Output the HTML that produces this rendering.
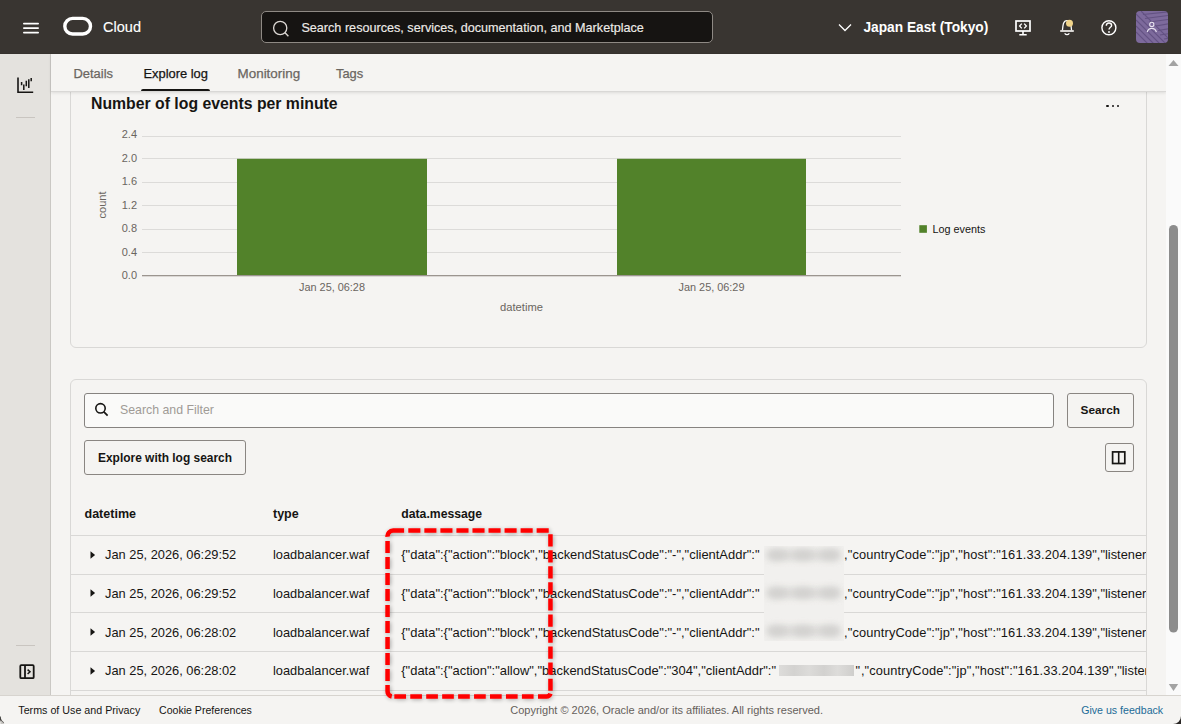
<!DOCTYPE html>
<html><head><meta charset="utf-8"><title>Explore log</title>
<style>
html,body{margin:0;padding:0;width:1181px;height:724px;overflow:hidden;background:#f5f4f2;}
body{position:relative;font-family:"Liberation Sans",sans-serif;}
.t{position:absolute;white-space:nowrap;line-height:1;font-family:"Liberation Sans",sans-serif;}
</style></head><body>
<div style="position:absolute;left:0px;top:0px;width:1181px;height:724px;background:#f5f4f2"></div>
<div style="position:absolute;left:0px;top:54px;width:50px;height:641px;background:#e4e2de"></div>
<div style="position:absolute;left:50px;top:54px;width:1px;height:641px;background:#cac8c4"></div>
<svg style="position:absolute;left:0;top:0" width="51" height="700">
<path d="M18 77.5 V92.2 H33.2" fill="none" stroke="#161513" stroke-width="1.6"/>
<path d="M21.6 82 V85.2 M23.8 84.6 V90 M26.3 80.8 V86.2 M28.8 79.2 V88 M31.2 78 V81.3" stroke="#161513" stroke-width="1.5"/>
<rect x="16" y="117" width="19" height="1" fill="#c9c5c0"/>
<rect x="16" y="645" width="19" height="1" fill="#c9c5c0"/>
<rect x="20.3" y="665.2" width="13.4" height="13" rx="1" fill="none" stroke="#161513" stroke-width="1.8"/>
<path d="M25 665 V678.5" stroke="#161513" stroke-width="1.8"/>
<path d="M27.6 669.6 L30 671.8 L27.6 674" fill="none" stroke="#161513" stroke-width="1.5"/>
</svg>
<div style="position:absolute;left:70px;top:40px;width:1077px;height:308px;border:1px solid #d9d8d6;border-radius:6px;box-sizing:border-box"></div>
<div class="t" style="left:91.00px;top:95.63px;font-size:15.8px;font-weight:700;color:#161513;">Number of log events per minute</div>
<div style="position:absolute;left:1106.05px;top:104.6px;width:2.5px;height:2.5px;border-radius:50%;background:#161513"></div>
<div style="position:absolute;left:1111.55px;top:104.6px;width:2.5px;height:2.5px;border-radius:50%;background:#161513"></div>
<div style="position:absolute;left:1116.85px;top:104.6px;width:2.5px;height:2.5px;border-radius:50%;background:#161513"></div>
<svg style="position:absolute;left:0;top:0" width="1181" height="360"><rect x="142" y="136" width="759" height="1" fill="#dcdbd9"/><rect x="142" y="158" width="759" height="1" fill="#dcdbd9"/><rect x="142" y="182" width="759" height="1" fill="#dcdbd9"/><rect x="142" y="205" width="759" height="1" fill="#dcdbd9"/><rect x="142" y="229" width="759" height="1" fill="#dcdbd9"/><rect x="142" y="252" width="759" height="1" fill="#dcdbd9"/><rect x="237" y="158.8" width="190" height="116.2" fill="#52822a"/><rect x="617" y="158.8" width="189" height="116.2" fill="#52822a"/><rect x="142" y="275" width="759" height="1.3" fill="#9b958f"/><rect x="919.3" y="225.2" width="7.6" height="7.6" fill="#52822a"/></svg>
<div class="t" style="right:1044.00px;top:129.29px;font-size:11px;font-weight:400;color:#6a6560;">2.4</div>
<div class="t" style="right:1044.00px;top:152.79px;font-size:11px;font-weight:400;color:#6a6560;">2.0</div>
<div class="t" style="right:1044.00px;top:176.29px;font-size:11px;font-weight:400;color:#6a6560;">1.6</div>
<div class="t" style="right:1044.00px;top:199.79px;font-size:11px;font-weight:400;color:#6a6560;">1.2</div>
<div class="t" style="right:1044.00px;top:223.29px;font-size:11px;font-weight:400;color:#6a6560;">0.8</div>
<div class="t" style="right:1044.00px;top:246.79px;font-size:11px;font-weight:400;color:#6a6560;">0.4</div>
<div class="t" style="right:1044.00px;top:270.29px;font-size:11px;font-weight:400;color:#6a6560;">0.0</div>
<div class="t" style="left:32.00px;width:600px;text-align:center;top:281.57px;font-size:10.9px;font-weight:400;color:#6a6560;">Jan 25, 06:28</div>
<div class="t" style="left:411.50px;width:600px;text-align:center;top:281.57px;font-size:10.9px;font-weight:400;color:#6a6560;">Jan 25, 06:29</div>
<div class="t" style="left:221.50px;width:600px;text-align:center;top:302.12px;font-size:11.2px;font-weight:400;color:#6a6560;">datetime</div>
<div class="t" style="left:932.50px;top:223.86px;font-size:10.8px;font-weight:400;color:#161513;">Log events</div>
<div class="t" style="left:73px;top:199px;width:60px;text-align:center;font-size:11px;color:#6a6560;transform:rotate(-90deg);transform-origin:30px 6px;">count</div>
<div style="position:absolute;left:70px;top:379px;width:1077px;height:381px;border:1px solid #d9d8d6;border-radius:6px;box-sizing:border-box"></div>
<div style="position:absolute;left:84px;top:393px;width:970px;height:35px;background:#fafaf9;border:1px solid #868380;border-radius:3px;box-sizing:border-box"></div>
<svg style="position:absolute;left:90px;top:398px" width="24" height="24">
<circle cx="10.5" cy="10.3" r="4.7" fill="none" stroke="#161513" stroke-width="1.6"/>
<path d="M13.9 13.8 L17.6 17.7" stroke="#161513" stroke-width="1.7"/>
</svg>
<div class="t" style="left:120.00px;top:403.55px;font-size:12.34px;font-weight:400;color:#a09b96;">Search and Filter</div>
<div style="position:absolute;left:1067px;top:393px;width:67px;height:35px;border:1px solid #8a8682;border-radius:3px;box-sizing:border-box"></div>
<div class="t" style="left:1080.50px;top:404.68px;font-size:11.84px;font-weight:700;color:#161513;">Search</div>
<div style="position:absolute;left:84px;top:440px;width:162px;height:35px;border:1px solid #8a8682;border-radius:3px;box-sizing:border-box"></div>
<div class="t" style="left:98.00px;top:452.89px;font-size:11.94px;font-weight:700;color:#161513;">Explore with log search</div>
<div style="position:absolute;left:1105px;top:443px;width:29px;height:29px;border:1px solid #8a8682;border-radius:3px;box-sizing:border-box"></div>
<svg style="position:absolute;left:1105px;top:443px" width="29" height="29">
<rect x="7.6" y="8.9" width="12.2" height="11.6" fill="none" stroke="#161513" stroke-width="1.7"/>
<path d="M13.7 8.5 V20.8" stroke="#161513" stroke-width="1.6"/>
</svg>
<div class="t" style="left:84.50px;top:508.40px;font-size:12.52px;font-weight:700;color:#161513;">datetime</div>
<div class="t" style="left:273.00px;top:508.42px;font-size:12.5px;font-weight:700;color:#161513;">type</div>
<div class="t" style="left:401.30px;top:508.46px;font-size:12.21px;font-weight:700;color:#161513;">data.message</div>
<div style="position:absolute;left:71px;top:535px;width:1075px;height:1px;background:#d9d8d6"></div>
<div style="position:absolute;left:71px;top:574px;width:1075px;height:1px;background:#d9d8d6"></div>
<div style="position:absolute;left:71px;top:612px;width:1075px;height:1px;background:#d9d8d6"></div>
<div style="position:absolute;left:71px;top:651px;width:1075px;height:1px;background:#d9d8d6"></div>
<div style="position:absolute;left:71px;top:690px;width:1075px;height:1px;background:#d9d8d6"></div>
<div style="position:absolute;left:71px;top:536px;width:1075px;height:159px;overflow:hidden">
<svg style="position:absolute;left:19px;top:13.75px" width="8" height="10"><path d="M0.5 1.25 L5.1 5 L0.5 8.75 Z" fill="#161513"/></svg>
<div class="t" style="left:34.00px;top:13.34px;font-size:12.83px;font-weight:400;color:#161513;">Jan 25, 2026, 06:29:52</div>
<div class="t" style="left:202.00px;top:13.34px;font-size:12.83px;font-weight:400;color:#161513;">loadbalancer.waf</div>
<div class="t" style="left:330.30px;top:13.24px;font-size:12.95px;font-weight:400;color:#161513;">{"data":{"action":"block","backendStatusCode":"-","clientAddr":"</div>
<div class="t" style="left:773.10px;top:13.34px;font-size:12.83px;font-weight:400;color:#161513;letter-spacing:0.13px;">,"countryCode":"jp","host":"</div>
<div class="t" style="left:929.80px;top:13.34px;font-size:12.83px;font-weight:400;color:#161513;letter-spacing:0.17px;">161.33.204.139</div>
<div class="t" style="left:1021.30px;top:13.34px;font-size:12.83px;font-weight:400;color:#161513;">","listenerOcid":"ocid1"</div>
<svg style="position:absolute;left:19px;top:52.45px" width="8" height="10"><path d="M0.5 1.25 L5.1 5 L0.5 8.75 Z" fill="#161513"/></svg>
<div class="t" style="left:34.00px;top:52.04px;font-size:12.83px;font-weight:400;color:#161513;">Jan 25, 2026, 06:29:52</div>
<div class="t" style="left:202.00px;top:52.04px;font-size:12.83px;font-weight:400;color:#161513;">loadbalancer.waf</div>
<div class="t" style="left:330.30px;top:51.94px;font-size:12.95px;font-weight:400;color:#161513;">{"data":{"action":"block","backendStatusCode":"-","clientAddr":"</div>
<div class="t" style="left:773.10px;top:52.04px;font-size:12.83px;font-weight:400;color:#161513;letter-spacing:0.13px;">,"countryCode":"jp","host":"</div>
<div class="t" style="left:929.80px;top:52.04px;font-size:12.83px;font-weight:400;color:#161513;letter-spacing:0.17px;">161.33.204.139</div>
<div class="t" style="left:1021.30px;top:52.04px;font-size:12.83px;font-weight:400;color:#161513;">","listenerOcid":"ocid1"</div>
<svg style="position:absolute;left:19px;top:91.15px" width="8" height="10"><path d="M0.5 1.25 L5.1 5 L0.5 8.75 Z" fill="#161513"/></svg>
<div class="t" style="left:34.00px;top:90.64px;font-size:12.83px;font-weight:400;color:#161513;">Jan 25, 2026, 06:28:02</div>
<div class="t" style="left:202.00px;top:90.64px;font-size:12.83px;font-weight:400;color:#161513;">loadbalancer.waf</div>
<div class="t" style="left:330.30px;top:90.54px;font-size:12.95px;font-weight:400;color:#161513;">{"data":{"action":"block","backendStatusCode":"-","clientAddr":"</div>
<div class="t" style="left:773.10px;top:90.64px;font-size:12.83px;font-weight:400;color:#161513;letter-spacing:0.13px;">,"countryCode":"jp","host":"</div>
<div class="t" style="left:929.80px;top:90.64px;font-size:12.83px;font-weight:400;color:#161513;letter-spacing:0.17px;">161.33.204.139</div>
<div class="t" style="left:1021.30px;top:90.64px;font-size:12.83px;font-weight:400;color:#161513;">","listenerOcid":"ocid1"</div>
<svg style="position:absolute;left:19px;top:129.85px" width="8" height="10"><path d="M0.5 1.25 L5.1 5 L0.5 8.75 Z" fill="#161513"/></svg>
<div class="t" style="left:34.00px;top:129.24px;font-size:12.83px;font-weight:400;color:#161513;">Jan 25, 2026, 06:28:02</div>
<div class="t" style="left:202.00px;top:129.24px;font-size:12.83px;font-weight:400;color:#161513;">loadbalancer.waf</div>
<div class="t" style="left:330.30px;top:129.14px;font-size:12.95px;font-weight:400;color:#161513;">{"data":{"action":"allow","backendStatusCode":"304","clientAddr":"</div>
<div class="t" style="left:784.60px;top:129.24px;font-size:12.83px;font-weight:400;color:#161513;">"</div>
<div class="t" style="left:789.90px;top:129.24px;font-size:12.83px;font-weight:400;color:#161513;letter-spacing:0.13px;">,"countryCode":"jp","host":"</div>
<div class="t" style="left:946.60px;top:129.24px;font-size:12.83px;font-weight:400;color:#161513;letter-spacing:0.17px;">161.33.204.139</div>
<div class="t" style="left:1038.10px;top:129.24px;font-size:12.83px;font-weight:400;color:#161513;">","listenerOcid":"ocid1"</div>
</div>
<div style="position:absolute;left:764px;top:546px;width:80px;height:94.5px;overflow:hidden;background:#f1f0ee"><div style="position:absolute;left:6px;top:3.5px;width:68px;height:10px;background:#dddcda;filter:blur(3px)"></div><div style="position:absolute;left:1.7px;top:3.5px;width:22px;height:10px;border-radius:50%;background:#d1d0ce;filter:blur(3.5px)"></div><div style="position:absolute;left:27.8px;top:3.5px;width:22px;height:10px;border-radius:50%;background:#d1d0ce;filter:blur(3.5px)"></div><div style="position:absolute;left:55.4px;top:3.5px;width:22px;height:10px;border-radius:50%;background:#d1d0ce;filter:blur(3.5px)"></div><div style="position:absolute;left:6px;top:41.9px;width:68px;height:10px;background:#dddcda;filter:blur(3px)"></div><div style="position:absolute;left:1.7px;top:41.9px;width:22px;height:10px;border-radius:50%;background:#d1d0ce;filter:blur(3.5px)"></div><div style="position:absolute;left:27.8px;top:41.9px;width:22px;height:10px;border-radius:50%;background:#d1d0ce;filter:blur(3.5px)"></div><div style="position:absolute;left:55.4px;top:41.9px;width:22px;height:10px;border-radius:50%;background:#d1d0ce;filter:blur(3.5px)"></div><div style="position:absolute;left:6px;top:79.6px;width:68px;height:10px;background:#dddcda;filter:blur(3px)"></div><div style="position:absolute;left:1.7px;top:79.6px;width:22px;height:10px;border-radius:50%;background:#d1d0ce;filter:blur(3.5px)"></div><div style="position:absolute;left:27.8px;top:79.6px;width:22px;height:10px;border-radius:50%;background:#d1d0ce;filter:blur(3.5px)"></div><div style="position:absolute;left:55.4px;top:79.6px;width:22px;height:10px;border-radius:50%;background:#d1d0ce;filter:blur(3.5px)"></div></div>
<div style="position:absolute;left:779px;top:665px;width:75px;height:11px;background:linear-gradient(90deg,#dddcda 0%,#d3d2d0 20%,#dcdbd9 40%,#d2d1cf 60%,#dddcda 78%,#cfcecc 100%)"></div>
<div style="position:absolute;left:51px;top:54px;width:1115px;height:38px;background:#f5f4f2;box-shadow:0 1px 3px rgba(0,0,0,0.10)"></div>
<div style="position:absolute;left:51px;top:91px;width:1115px;height:1px;background:#d9d8d6"></div>
<div class="t" style="left:73.50px;top:67.66px;font-size:12.92px;font-weight:400;color:#6b6661;-webkit-text-stroke:0.25px #6b6661;">Details</div>
<div class="t" style="left:143.40px;top:67.67px;font-size:12.91px;font-weight:400;color:#161513;-webkit-text-stroke:0.25px #161513;">Explore log</div>
<div class="t" style="left:237.60px;top:67.26px;font-size:13.4px;font-weight:400;color:#6b6661;-webkit-text-stroke:0.25px #6b6661;">Monitoring</div>
<div class="t" style="left:336.00px;top:67.68px;font-size:12.9px;font-weight:400;color:#6b6661;-webkit-text-stroke:0.25px #6b6661;">Tags</div>
<div style="position:absolute;left:141px;top:89px;width:69px;height:2px;background:#161513;border-radius:2px 2px 0 0"></div>
<div style="position:absolute;left:0px;top:0px;width:1181px;height:54px;background:#393531"></div>
<div style="position:absolute;left:0px;top:53px;width:1181px;height:1px;background:#36322e"></div>
<svg style="position:absolute;left:0;top:0" width="1181" height="53">
<rect x="23" y="22.7" width="16" height="1.8" rx="0.9" fill="#fff"/>
<rect x="23" y="27.2" width="16" height="1.8" rx="0.9" fill="#fff"/>
<rect x="23" y="31.7" width="16" height="1.8" rx="0.9" fill="#fff"/>
<rect x="64.8" y="18.4" width="25.7" height="15.6" rx="7.8" fill="none" stroke="#fff" stroke-width="3.4"/>
<rect x="261.5" y="11.5" width="451" height="31" rx="4.5" fill="#161412" stroke="#8e8984" stroke-width="1"/>
<circle cx="280.2" cy="28" r="6.6" fill="none" stroke="#dcd8d4" stroke-width="1.3"/>
<path d="M284.8 32.6 L288.4 36.2" stroke="#dcd8d4" stroke-width="1.4"/>
<path d="M839 24.5 L845 30.5 L851 24.5" fill="none" stroke="#fff" stroke-width="1.3"/>
<rect x="1016" y="21" width="14" height="10" fill="none" stroke="#fff" stroke-width="1.7"/>
<path d="M1023 31 V34.5 M1019.3 34.8 H1026.7" stroke="#fff" stroke-width="1.6"/>
<path d="M1021.8 23.6 L1019.6 26 L1021.8 28.4 M1024.2 23.6 L1026.4 26 L1024.2 28.4" fill="none" stroke="#fff" stroke-width="1.3"/>
<path d="M1062.4 30.5 C1062.7 27.5 1063 25 1063.4 23.6 C1064.1 21.6 1065.5 20.7 1067 20.7 C1068.5 20.7 1069.9 21.6 1070.6 23.6 C1071 25 1071.3 27.5 1071.6 30.5" fill="none" stroke="#fff" stroke-width="1.3"/>
<path d="M1060.2 31 H1073.8" stroke="#e8e6e3" stroke-width="1.8"/>
<path d="M1064.6 33.4 Q1067 36 1069.4 33.4" fill="none" stroke="#fff" stroke-width="1.3"/>
<circle cx="1069.5" cy="23.2" r="3.5" fill="#f1d48a"/>
<circle cx="1108.9" cy="27.8" r="7" fill="none" stroke="#fff" stroke-width="1.4"/>
<path d="M1106.3 25.8 C1106.3 23.8 1107.5 23 1109 23 C1110.6 23 1111.6 24 1111.6 25.4 C1111.6 27.3 1109 27.4 1109 29.6" fill="none" stroke="#fff" stroke-width="1.4"/>
<circle cx="1109" cy="32" r="0.9" fill="#fff"/>
</svg>
<div class="t" style="left:103.00px;top:19.89px;font-size:14.54px;font-weight:400;color:#ffffff;-webkit-text-stroke:0.12px #fff;">Cloud</div>
<div class="t" style="left:301.40px;top:21.91px;font-size:12.63px;font-weight:400;color:#eeebe8;-webkit-text-stroke:0.15px #eeebe8;">Search resources, services, documentation, and Marketplace</div>
<div class="t" style="left:863.40px;top:20.67px;font-size:13.74px;font-weight:700;color:#ffffff;">Japan East (Tokyo)</div>
<svg style="position:absolute;left:1136px;top:11px" width="32" height="32">
<defs><clipPath id="av"><rect width="32" height="32" rx="4"/></clipPath></defs>
<g clip-path="url(#av)">
<rect width="32" height="32" fill="#7d6a9c"/>
<g stroke="#5b4a7a" stroke-width="1.1" fill="none" opacity="0.75">
<path d="M7 3.5 L40 0"/><path d="M9 7.5 L40 3.5"/><path d="M13 11 L40 7.5"/><path d="M20 15 L40 11.5"/><path d="M22 19.5 L40 16.5"/><path d="M24 24 L40 21.5"/><path d="M28 28 L40 26"/>
<path d="M0 3 L30 33"/><path d="M0 9 L24 33"/><path d="M0 15 L18 33"/><path d="M0 21 L12 33"/><path d="M5 0 L37 32"/>
</g>
</g>
<circle cx="15.8" cy="13.4" r="2.1" fill="none" stroke="#e9e4f0" stroke-width="1.1"/>
<path d="M11.2 21 C12 18.4 13.8 17.4 15.8 17.4 C17.8 17.4 19.6 18.4 20.4 21" fill="none" stroke="#e9e4f0" stroke-width="1.1"/>
</svg>
<div style="position:absolute;left:1166px;top:54px;width:15px;height:641px;background:#fafafa"></div>
<svg style="position:absolute;left:1166px;top:53px" width="15" height="642">
<path d="M2.5 13 L7.5 7 L12.5 13 Z" fill="#a3a3a3"/>
<rect x="3" y="172" width="9" height="407.5" rx="4.5" fill="#8c8c8c"/>
<path d="M2.8 631 L12.2 631 L7.5 638 Z" fill="#a3a3a3"/>
</svg>
<div style="position:absolute;left:0px;top:695px;width:1181px;height:29px;background:#f5f4f2"></div>
<div style="position:absolute;left:0px;top:695px;width:1181px;height:1px;background:#d7d4cf"></div>
<div class="t" style="left:18.30px;top:705.23px;font-size:10.71px;font-weight:400;color:#161513;">Terms of Use and Privacy</div>
<div class="t" style="left:159.00px;top:705.34px;font-size:10.59px;font-weight:400;color:#161513;">Cookie Preferences</div>
<div class="t" style="left:510.20px;top:704.97px;font-size:11.02px;font-weight:400;color:#65605b;">Copyright © 2026, Oracle and/or its affiliates. All rights reserved.</div>
<div class="t" style="left:1081.20px;top:704.92px;font-size:10.61px;font-weight:400;color:#1c6b97;">Give us feedback</div>
<svg style="position:absolute;left:0;top:0" width="1181" height="724">
<path d="M1181 716 V724 H1173 A8 8 0 0 0 1181 716 Z" fill="#2a2725"/>
<path d="M0 716.5 A7.5 7.5 0 0 0 3.5 723" fill="none" stroke="#2f2c2a" stroke-width="1.6" opacity="0.9"/><path d="M0.5 720 V724 H4.5 Z" fill="#c9c7c4"/>
</svg>
<svg style="position:absolute;left:0;top:0;overflow:visible" width="1181" height="724">
<defs><filter id="sh" x="-10%" y="-10%" width="120%" height="120%"><feGaussianBlur in="SourceAlpha" stdDeviation="2"/><feOffset dx="0.8" dy="1"/><feComponentTransfer><feFuncA type="linear" slope="0.33"/></feComponentTransfer><feMerge><feMergeNode/><feMergeNode in="SourceGraphic"/></feMerge></filter></defs>
<path d="M408.30 530.6 H420.40 M424.34 530.6 H436.44 M440.38 530.6 H452.48 M456.42 530.6 H468.52 M472.46 530.6 H484.56 M488.50 530.6 H500.60 M504.54 530.6 H516.64 M520.58 530.6 H532.68 M536.62 530.6 H548.72 M550.45 534.20 V546.40 M550.45 550.25 V562.45 M550.45 566.30 V578.50 M550.45 582.35 V594.55 M550.45 598.40 V610.60 M550.45 614.45 V626.65 M550.45 630.50 V642.70 M550.45 646.55 V658.75 M550.45 662.60 V674.80 M550.45 678.65 V690.85 M387.55 540.90 V552.90 M387.55 556.92 V568.92 M387.55 572.94 V584.94 M387.55 588.96 V600.96 M387.55 604.98 V616.98 M387.55 621.00 V633.00 M387.55 637.02 V649.02 M387.55 653.04 V665.04 M387.55 669.06 V681.06 M394.30 696.5 H406.00 M410.25 696.5 H421.95 M426.20 696.5 H437.90 M442.15 696.5 H453.85 M458.10 696.5 H469.80 M474.05 696.5 H485.75 M490.00 696.5 H501.70 M505.95 696.5 H517.65 M521.90 696.5 H533.60 M387.55 536.8 A5.6 5.6 0 0 1 393.15 530.6 H404.1 M387.55 685.1 V691.2 A5.3 5.3 0 0 0 391.75 696.5 M538.0 696.5 H546.5 A4.2 4.2 0 0 0 550.45 693.6" fill="none" stroke="#ff0000" stroke-width="4.5" stroke-linecap="butt" filter="url(#sh)"/>
</svg>
</body></html>
